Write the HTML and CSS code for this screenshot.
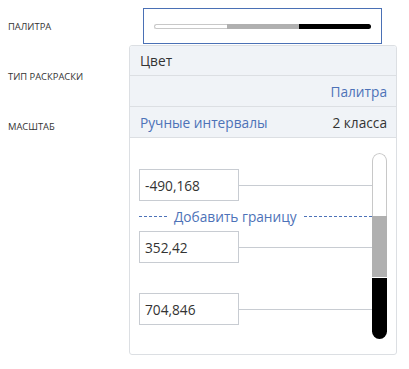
FILE: index.html
```html
<!doctype html>
<html lang="ru">
  <head>
    <meta charset="utf-8">
    <title>Настройки слоя</title>
    <link rel="stylesheet" href="styles.css">
  </head>
  <body>
    <div class="settings">
      <div class="row">
        <div class="label">Палитра</div>
        <div class="control">
          <div class="palette-box">
            <div class="palette-bar">
              <span class="seg seg-white"></span>
              <span class="seg seg-gray"></span>
              <span class="seg seg-black"></span>
            </div>
          </div>
        </div>
      </div>
      <div class="row">
        <div class="label">Тип раскраски</div>
        <div class="control"></div>
      </div>
      <div class="row">
        <div class="label">Масштаб</div>
        <div class="control"></div>
      </div>

      <div class="dropdown">
        <div class="dd-row dd-title">Цвет</div>
        <div class="dd-row dd-right">
          <span class="link">Палитра</span>
        </div>
        <div class="dd-row dd-split">
          <span class="link">Ручные интервалы</span>
          <span>2 класса</span>
        </div>
        <div class="scale">
          <div class="stops">
            <div class="stop">
              <input class="stop-input" value="-490,168">
              <span class="stop-line"></span>
            </div>
            <div class="gap">
              <div class="add-bound">
                <span class="dash dash-left"></span>
                <span class="link">Добавить границу</span>
                <span class="dash dash-right"></span>
              </div>
            </div>
            <div class="stop">
              <input class="stop-input" value="352,42">
              <span class="stop-line"></span>
            </div>
            <div class="gap"></div>
            <div class="stop">
              <input class="stop-input" value="704,846">
              <span class="stop-line"></span>
            </div>
          </div>
          <div class="slider">
            <div class="sl sl-white"></div>
            <div class="sl sl-gray"></div>
            <div class="sl sl-black"></div>
          </div>
        </div>
      </div>
    </div>
  </body>
</html>
```

FILE: styles.css
```css
body {
  margin: 0;
  background: #fff;
  font-family: "Open Sans", "Noto Sans", sans-serif;
  color: #333;
}

.settings {
  position: relative;
  padding-top: 1px;
  min-height: 368px;
}

.row {
  display: flex;
  align-items: center;
  height: 50px;
}

.label {
  width: 143px;
  padding-left: 8px;
  box-sizing: border-box;
  font-size: 9.4px;
  text-transform: uppercase;
  color: #333;
}

.palette-box {
  width: 239px;
  height: 36px;
  box-sizing: border-box;
  border: 1px solid #4a70b5;
  display: flex;
  align-items: center;
  padding: 0 10px;
}

.palette-bar {
  display: flex;
  width: 100%;
  height: 5px;
}

.seg {
  flex: 1;
}

.seg-white {
  background: #fff;
  border: 1px solid #c8c8c8;
  border-right: none;
  border-radius: 3px 0 0 3px;
}

.seg-gray {
  background: #b0b0b0;
}

.seg-black {
  background: #000;
  border-radius: 0 3px 3px 0;
}

.dropdown {
  position: absolute;
  left: 129px;
  top: 45px;
  width: 268px;
  height: 310px;
  box-sizing: border-box;
  border: 1px solid #dcdfe3;
  border-radius: 3px;
  background: #fff;
  font-size: 13.7px;
}

.dd-row {
  display: flex;
  align-items: center;
  height: 31px;
  box-sizing: border-box;
  padding: 0 9px 0 10px;
  background: #f0f3f7;
  border-bottom: 1px solid #dcdfe3;
}

.dd-title {
  height: 30px;
  border-radius: 3px 3px 0 0;
}

.dd-right {
  justify-content: flex-end;
}

.dd-split {
  justify-content: space-between;
}

.link {
  color: #4d72b8;
}

.scale {
  display: flex;
  padding: 15px 9px 0 9px;
}

.stops {
  flex: 1;
  padding-top: 16px;
}

.stop {
  display: flex;
  align-items: center;
}

.stop-input {
  width: 100px;
  height: 32px;
  box-sizing: border-box;
  border: 1px solid #c8ccd2;
  padding: 0 5px;
  margin: 0;
  font: inherit;
  color: #333;
  outline: none;
}

.stop-line {
  flex: 1;
  height: 1px;
  background: #c8ccd2;
}

.gap {
  height: 30px;
  display: flex;
  align-items: center;
}

.add-bound {
  display: flex;
  align-items: center;
  width: 100%;
  gap: 7px;
}

.dash {
  height: 1px;
  background: repeating-linear-gradient(to right, #4d72b8 0 3px, transparent 3px 5px);
}

.dash-left {
  width: 28px;
}

.dash-right {
  flex: 1;
}

.slider {
  width: 15px;
  height: 186px;
  display: flex;
  flex-direction: column;
  border-radius: 8px;
  overflow: hidden;
}

.sl-white {
  height: 63px;
  box-sizing: border-box;
  border: 1px solid #c8c8c8;
  border-bottom: none;
  border-radius: 8px 8px 0 0;
  background: #fff;
}

.sl-gray {
  height: 61px;
  background: #b0b0b0;
  border-bottom: 1px solid #fff;
}

.sl-black {
  flex: 1;
  background: #000;
}
```
